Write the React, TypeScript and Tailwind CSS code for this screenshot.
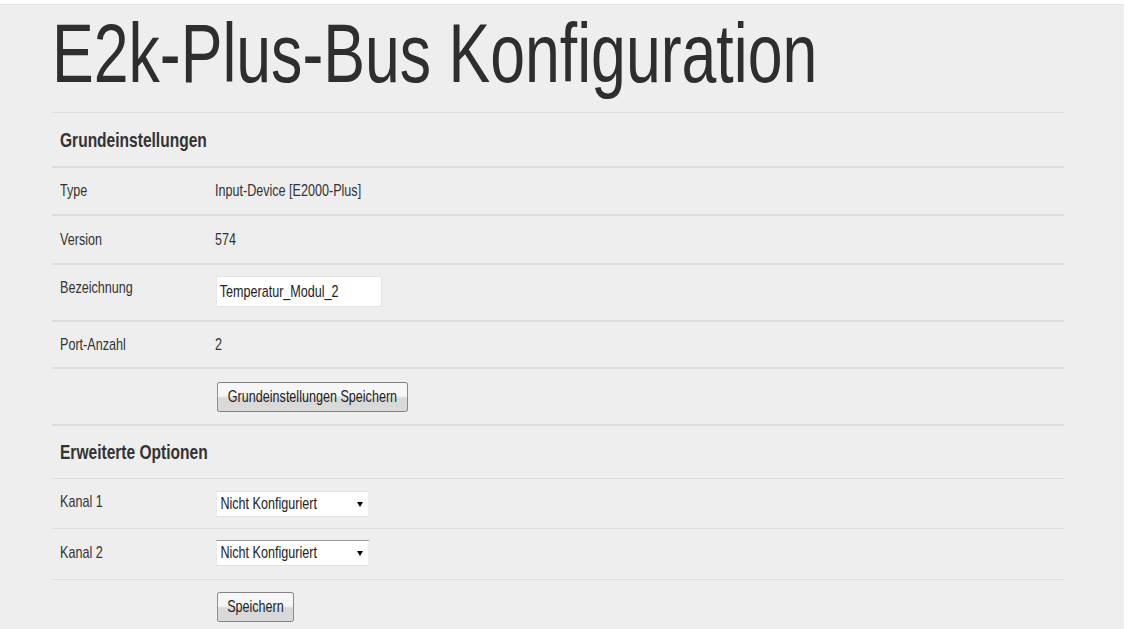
import React from 'react';

// the reference is squeezed sideways, so text is drawn narrow
const narrow = "inline-block origin-left scale-x-[0.74] whitespace-nowrap";

function Label({ children, className = "" }: { children: React.ReactNode; className?: string }) {
    return <div className={"pl-2 text-[17px] leading-5 " + className}><span className={narrow}>{children}</span></div>
}

function Value({ children, className = "" }: { children: React.ReactNode; className?: string }) {
    return <div className={"text-[17px] leading-5 " + className}><span className={narrow}>{children}</span></div>
}

function Btn({ text, w }: { text: string; w: string }) {
    return (
        <button
            type="button"
            className={"origin-left scale-x-[0.74] h-[30px] rounded-[3px] border border-[#707070] bg-linear-to-b from-[#f6f6f6] from-45% to-[#d9d9d9] to-55% text-[17px] leading-5 text-[#222] whitespace-nowrap " + w}
        >
            {text}
        </button>
    )
}

function Select({ dark }: { dark?: boolean }) {
    return (
        <div className="relative w-[153px] h-[26px]">
            <select
                defaultValue="0"
                className={"appearance-none origin-left scale-x-[0.74] w-[207px] h-[26px] bg-white border border-[#e2e2e2] pl-[5px] text-[17px] leading-5 text-[#222] outline-none " + (dark ? "border-t-[#9a9a9a]" : "")}
            >
                <option value="0">Nicht Konfiguriert</option>
                <option value="1">Temperatur</option>
            </select>
            <span className="absolute right-[6px] top-[11px] w-0 h-0 border-x-[3px] border-t-[5px] border-x-transparent border-t-black"/>
        </div>
    )
}

function App() {
    const row = "grid grid-cols-[163px_1fr] items-center border-[#dddddd]";

    return (
        <div className="w-[1141px] h-[629px] bg-white overflow-hidden font-['Liberation_Sans',Arial,sans-serif] text-[#333333]">
            <div className="mt-[4px] w-[1124px] h-[625px] bg-[#eeeeee] border-t border-[#e4e4e4]">
                <div className="ml-[52px] w-[1012px]">
                    <div className="h-[107px] pt-[6px]">
                        <h1 className="inline-block origin-left scale-x-[0.745] whitespace-nowrap text-[84px] leading-none text-[#2e2e2e]">E2k-Plus-Bus Konfiguration</h1>
                    </div>

                    {/* Grundeinstellungen */}
                    <div className="h-[54px] flex items-center pl-2 border-t border-[#dddddd]">
                        <h2 className={"text-[21px] leading-6 font-bold text-[#333] " + narrow}>Grundeinstellungen</h2>
                    </div>
                    <div className={row + " h-[48px] border-t-2"}>
                        <Label>Type</Label>
                        <Value>Input-Device [E2000-Plus]</Value>
                    </div>
                    <div className={row + " h-[49px] border-t-2"}>
                        <Label>Version</Label>
                        <Value>574</Value>
                    </div>
                    <div className={row + " h-[57px] border-t-2"}>
                        <Label className="mb-[10px]">Bezeichnung</Label>
                        <div className="ml-px mb-[2px] w-[166px]">
                            <input
                                type="text"
                                defaultValue="Temperatur_Modul_2"
                                className="origin-left scale-x-[0.74] w-[224px] h-[31px] bg-white border border-[#e0e0e0] rounded-[2px] pl-[4px] text-[17px] leading-5 text-[#222] outline-none"
                            />
                        </div>
                    </div>
                    <div className={row + " h-[47px] border-t-2"}>
                        <Label>Port-Anzahl</Label>
                        <Value>2</Value>
                    </div>
                    <div className={row + " h-[57px] border-t-2"}>
                        <div/>
                        <div className="ml-[2px] w-[191px]">
                            <Btn text="Grundeinstellungen Speichern" w="w-[258px]"/>
                        </div>
                    </div>

                    {/* Erweiterte Optionen */}
                    <div className="h-[54px] flex items-center pl-2 border-t-2 border-[#dddddd]">
                        <h2 className={"text-[21px] leading-6 font-bold text-[#333] " + narrow}>Erweiterte Optionen</h2>
                    </div>
                    <div className={row + " h-[50px] border-t"}>
                        <Label className="mb-[4px]">Kanal 1</Label>
                        <div className="ml-px">
                            <Select/>
                        </div>
                    </div>
                    <div className={row + " h-[51px] border-t"}>
                        <Label className="mb-[2px]">Kanal 2</Label>
                        <div className="ml-px mb-[3px]">
                            <Select dark/>
                        </div>
                    </div>
                    <div className={row + " h-[50px] border-t items-start pt-[12px]"}>
                        <div/>
                        <div className="ml-[2px] w-[77px]">
                            <Btn text="Speichern" w="w-[104px]"/>
                        </div>
                    </div>
                </div>
            </div>
        </div>
    );
}

export default App;
